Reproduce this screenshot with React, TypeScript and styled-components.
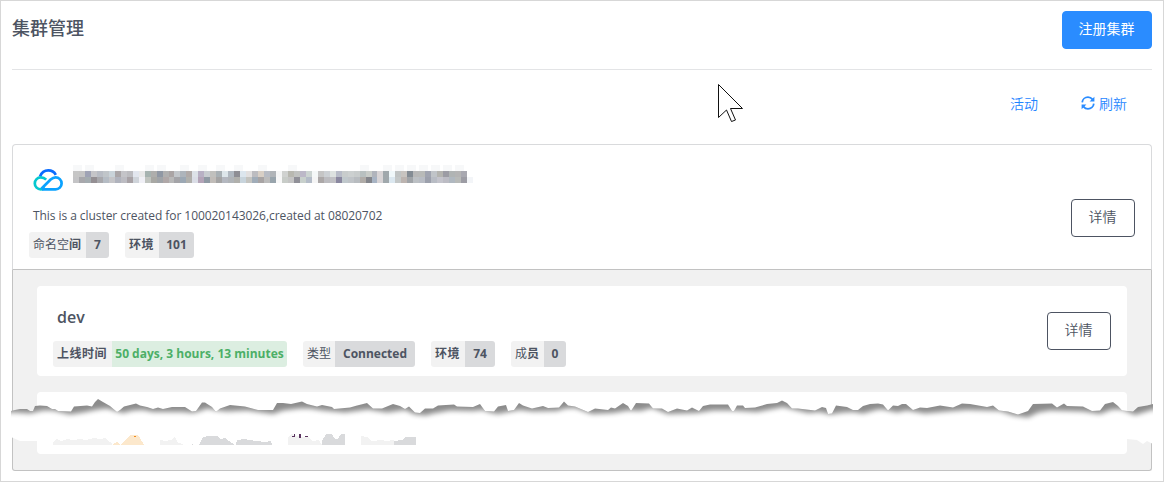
import React from 'react';
import styled, { createGlobalStyle } from 'styled-components';

const GlobalStyle = createGlobalStyle`
  * { box-sizing: border-box; }
  body {
    margin: 0;
    background: #fff;
    color: #4d5462;
    font-family: "Open Sans", "Noto Sans CJK SC", sans-serif;
  }
`;

const Page = styled.main`
  position: relative;
  width: 1164px;
  height: 482px;
  border: 1px solid #d7d7d7;
  padding: 0 11px;
  overflow: hidden;
`;

const Header = styled.header`
  display: flex;
  justify-content: space-between;
  align-items: flex-start;
  height: 69px;
  padding-top: 10px;
  border-bottom: 1px solid #e3e4e6;
`;

const Title = styled.h1`
  margin: 4px 0 0;
  font-size: 18px;
  line-height: 26px;
  font-weight: 500;
`;

const Button = styled.button<{ $primary?: boolean }>`
  width: ${p => (p.$primary ? 90 : 64)}px;
  height: 38px;
  flex: none;
  padding: 0 1px 4px 0;
  border: 1px solid ${p => (p.$primary ? '#2a8cff' : '#4d5462')};
  border-radius: 4px;
  background: ${p => (p.$primary ? '#2a8cff' : '#fff')};
  color: ${p => (p.$primary ? '#fff' : '#4d5462')};
  font-family: inherit;
  font-size: 14px;
  font-weight: ${p => (p.$primary ? 400 : 350)};
`;

const Actions = styled.nav`
  display: flex;
  justify-content: flex-end;
  gap: 43px;
  height: 74px;
  padding: 23px 25px 0 0;
`;

const Action = styled.a`
  display: flex;
  align-items: center;
  gap: 4px;
  height: 20px;
  color: #1f85ff;
  font-size: 14px;
  font-weight: 350;
`;

const Cluster = styled.section`
  height: 126px;
  display: flex;
  justify-content: space-between;
  padding: 20px 16px 0;
  border: 1px solid #d9dadc;
  border-bottom-color: #c2c2c2;
  border-radius: 4px 4px 0 0;
`;

const ButtonSlot = styled.div`
  padding-top: 34px;
`;

const NameRow = styled.div`
  display: flex;
  gap: 10px;
  height: 34px;
  padding-left: 4px;
`;

const Description = styled.p`
  margin: 8px 0 7px 4px;
  font-size: 12px;
  line-height: 18px;
  height: 18px;
  letter-spacing: -0.062px;
`;

const Details = styled.section`
  height: 201px;
  padding: 16px 24px;
  display: flex;
  flex-direction: column;
  gap: 16px;
  background: #f1f1f1;
  border: 1px solid #c2c2c2;
  border-top: 0;
  border-radius: 0 0 3px 3px;
`;

const Member = styled.article<{ $height: number }>`
  display: flex;
  justify-content: space-between;
  height: ${p => p.$height}px;
  padding: 18px 16px 0;
  background: #fff;
  border-radius: 4px;
`;

const MemberButtonSlot = styled.div`
  padding-top: 8px;
`;

const MemberName = styled.h2`
  margin: 0 0 11px 4px;
  font-size: 16px;
  line-height: 26px;
  font-weight: 650;
`;

const Tags = styled.div`
  display: flex;
  gap: 16px;
`;

const TagBox = styled.div`
  display: flex;
  height: 26px;
  border-radius: 3px;
  overflow: hidden;
  font-size: 12px;
  line-height: 25px;
  white-space: nowrap;
`;

const TagLabel = styled.span<{ $width: number }>`
  width: ${p => p.$width}px;
  padding-left: 4px;
  background: #f2f2f2;
  b { font-weight: 600; letter-spacing: 0.5px; }
`;

const TagValue = styled.span<{ $width: number; $green?: boolean }>`
  width: ${p => p.$width}px;
  text-align: center;
  font-weight: 700;
  background: ${p => (p.$green ? '#dceee1' : '#d9dadc')};
  color: ${p => (p.$green ? '#4caf67' : '#4d5462')};
`;

const Overlay = styled.svg`
  position: absolute;
  left: -1px;
  top: -1px;
  pointer-events: none;
`;

type TagProps = {
  label: React.ReactNode;
  value: string;
  widths: [number, number];
  green?: boolean;
};

const Tag = ({ label, value, widths, green }: TagProps) => (
  <TagBox>
    <TagLabel $width={widths[0]}>{label}</TagLabel>
    <TagValue $width={widths[1]} $green={green}>{value}</TagValue>
  </TagBox>
);

const CloudLogo = () => (
  <svg width="30" height="34" viewBox="0 0 30 34" fill="none" strokeWidth="2.7">
    <path d="M7 11.5C8.5 7.6 11.5 5.4 15.3 5.4c3.4 0 6.2 2 7.5 4.4" stroke="#0a6cff" />
    <path d="M13.2 14.6C11.6 13 9.8 12.4 7.8 12.4A6 6 0 0 0 7.8 24.4C9.4 24.4 10.5 24 12 22.7" stroke="#05c8cf" />
    <path d="M9 24.4h13.6a6 6 0 0 0 0-12c-2 0-3.4.8-5 2.2L8.4 23.8" stroke="#0aa2ff" />
  </svg>
);

const RefreshIcon = () => (
  <svg width="14" height="14" viewBox="0 0 14 14" fill="none">
    <path d="M1.2 6.3C1.5 3.3 4 1.2 7 1.2c1.8 0 3.4.8 4.5 2.2M12.8 7.7c-.3 3-2.8 5.1-5.8 5.1-1.8 0-3.4-.8-4.5-2.2" stroke="#2a8cff" strokeWidth="1.8" />
    <path d="M13.4.7v4.8H8.6zM.6 13.3V8.5h4.8z" fill="#2a8cff" />
  </svg>
);

const MOSAIC = [
  'c6c6c6 c4c4c4 9fa3b5 c5c5c8 b8bcc4 c0c5c9 c9d3d9 aaa6a8 c4c4c8 bcbcc0 e2e6ee e8e8e8 a6b3b0 aeaeac 9098a4 b0b0b0 aaa4a4 c2c6ca adb4bb b0aaa8 dde2e8 b8b0c4 c8ccd0 c0c0bd a8b0b4 dde6ea b0b8c0 8e8e94 dce6ee e2e0e0 bcbcc0 d8cfc5 b8bcc4 b0b4b8 f5f6f6 d0d2d0 b8b8b0 c0c2c0 bcb8c8 ccd4d2 f5f8f8 c5c5c5 ccd0d4 dde2e0 b8bcc8 c8cccc ccd0d0 c8cccc b8c0c0 c8ccc8 b0b4bc d8d4d6 a0a8ac f0f8fa c0c4c4 c8c4c0 848c94 b8b8b8 b8bab8 a0a4b0 c0c4c8 b4b4b0 9c9ca4 b0b4b4 b4b4b4 a8a8b0',
  'c4c4c6 a8a8ac a4acb0 948f93 a8a8ac b5bcc4 c5c5c8 b0b3bd bcbcc2 a8a2a6 cfd4da f0f0f6 c0c4bf a8a8a4 a0a4a8 b0a8a8 b8b8b8 a4a4a8 9ca8b4 b0b0ac dadde6 b4a4b8 909aa4 c0bcb8 a4a4a4 b4b8c0 b0b4b8 b0b0ac c8d4dc c4c4c0 a0acb8 a8a4a4 bcbcbc 98a4ac f8f8f8 c8ccc8 c4c4c4 909098 c8d0cc b4bcc8 f5f5f5 aca8a8 bcbcc0 c0c0c4 8a88a0 c0c8cc c0c4c8 b8bcc0 b0aca8 84868c a8b4c4 d8d4d6 a0a8ac dce8f0 c4c8c8 bcb4b0 a0a4a8 bcc0c4 b8bcc4 9ca0ac b8bcc4 c4c4cc bcbcc4 b0b8c0 b8bab8 9c9ca4',
].map(row => row.split(' '));

const Mosaic = () => (
  <svg width="400" height="18" viewBox="0 0 400 18" shapeRendering="crispEdges">
    {[0, 2, 7, 12, 14, 18, 21, 24, 27, 31, 36, 48, 52, 54, 56, 58, 60, 62, 64].map(c => (
      <rect key={c} x={c * 5.97} y="0" width="9" height="6" fill="#f7f8f9" />
    ))}
    {MOSAIC.map((row, r) =>
      row.map((cell, c) => (
        <rect key={`${r}-${c}`} x={c * 5.97} y={6 + r * 6} width="5.97" height="6" fill={`#${cell}`} />
      )),
    )}
    <rect x="394" y="12" width="6" height="6" fill="#f3f5f8" />
  </svg>
);

const TEAR_TOP =
  '11,411 15,410 20,409 27,409 30,411 33,411 35,406 40,405.5 47,406 52,409 55,409 58,411 71,411.5 74,406.5 87,405.5 92,406.5 95,402 98,399 103,402 110,406 117,412 120,410 124,406.5 136,403.5 140,405.5 147,407 153,409 158,407.5 163,409 172,407 185,407 192,411.5 196,411 202,402.5 205,402.5 212,407 216,412 220,408.5 230,405 245,406.5 258,410 273,410 277,403 283,403 291,404 302,401.5 307,404 317,406.5 322,405 332,407 334,409 350,407.5 357,405.5 367,403 373,408.5 382,408.5 393,404 400,406 405,409 409,406.5 415,412.5 420,413 425,408.5 433,408.5 438,405.5 454,404.5 457,406.5 473,407 480,404 485,411 494,411.5 498,406.5 506,405 508,411 514,410 519,403 523,405.5 532,408.5 543,406 548,408 559,407.5 564,401.5 568,405.5 575,406.5 588,412 595,408.5 608,410 611,407.5 615,408.5 623,403 628,406 631,411 636,403 649,403.5 653,408.5 662,408.5 668,412 677,408.5 687,410.5 692,407.5 699,411 703,406 710,404.5 728,404.5 732,411 734,411 737,405.5 743,405.5 745,408 755,407.5 767,404 777,403 782,400.5 787,403 792,408.5 798,408.5 815,410.5 822,407 826,408 828,414 832,413.5 836,405.5 847,407 853,410 858,410 863,406 870,404 878,403.5 883,404.5 888,410.5 893,405.5 898,406 902,404 906,404 913,410 920,407.5 927,408 940,405.5 953,407.5 962,403.5 970,404 987,407 993,405.5 999,410.5 1008,411.5 1018,414.5 1028,411 1033,404 1052,403.5 1057,407.5 1064,403.5 1067,406 1083,406.5 1092,411 1100,410.5 1105,404 1113,402 1118,406 1122,410.5 1133,411.5 1138,407 1147,405.5 1153,404';

const TEAR_LOW =
  '0,414 15,414 30,415 43,412 53,412 70,416 83,414 98,411 107,410 117,413 123,414.5 133,412 143,411.5 153,413.5 182,413.5 193,414.5 202,412 207,410 217,412 227,413 247,412 273,415.5 283,412 300,410 310,410 323,412 345,414 368,411 387,414 405,411.5 415,416 426,417 433,415 450,412 473,412.5 483,411.5 490,414 498,415.5 508,413.5 520,411.5 533,413 557,412.5 565,410 575,409.5 592,415.5 613,414.5 628,412 640,412.5 652,409.5 668,415.5 697,414.5 713,412 730,412 757,413.5 770,411 783,408.5 793,411 808,414.5 820,413.5 830,416 843,414 853,413.5 863,415 878,411 883,411 897,414 907,412 925,415 947,413 967,411.5 1000,412.5 1013,417 1028,419 1038,414 1050,412 1083,413 1100,415.5 1112,411 1122,411 1135,416.5 1153,411 1164,411';

const PaperTear = () => (
  <g>
    <defs>
      <clipPath id="tearArea">
        <polygon points={`${TEAR_TOP} 1153,444 1147,441 1143,444 1137,440 1127,439 1127,445 37,445 37,441 20,441 11,437`} shapeRendering="crispEdges" />
      </clipPath>
      <filter id="soften" x="-5%" y="-40%" width="110%" height="180%">
        <feGaussianBlur stdDeviation="2.5" />
      </filter>
    </defs>
    <g clipPath="url(#tearArea)">
      <rect x="0" y="395" width="1164" height="30" fill="#8c8c8c" />
      <polygon transform="translate(0 -1.5)" points={`${TEAR_LOW} 1180,411 1180,480 -20,480 -20,414`} fill="#fff" filter="url(#soften)" />
    </g>
    <g shapeRendering="crispEdges">
      <path d="M53 445v-3l4-3 4 2 6-2 6 1 7-1 6 1 8-2 6 1 5-1 5 4 2 1v2z" fill="#f2f2f2" />
      <path d="M112 445l5-3 3 3h1l5-6 5-4 6 0 3 3 4 7z" fill="#fce8cc" />
      <path d="M134 436h2v1h-2z" fill="#f08c1e" />
      <path d="M160 445v-5l5 1 6-1 4-3 3 6 5 1v1z" fill="#f2f2f2" />
      <path d="M192 444h1v1h-1zM199 445l4-8 6-1h8l4 3 4-1 4 3 6 4zM236 445l1-5 7-1 6 1 6 1 9 1 6-1 1 4z" fill="#d9dadc" />
      <path d="M288 445v-8l4-3 8 3 8 0 5 4 6-1 3 5z" fill="#f2f2f2" />
      <path d="M322 445v-4l4-7h6l3 5h3l3-5h4v11z" fill="#d9dadc" />
      <path d="M361 445v-9l6 1 5 4 9-1 5 1 8-1v5z" fill="#f2f2f2" />
      <path d="M394 445v-4l8-1 4-3h10v8z" fill="#d9dadc" />
      <path d="M292 436h3v1h-3zM294 434h1v2h-1zM299 434h2v4h-2zM305 436h3v1h-3z" fill="#5b3460" />
    </g>
  </g>
);

const Cursor = () => (
  <path d="M718.5 84.5v33l8-7.5 5 11.5 4-1.5-5-11.5h12z" fill="#fff" stroke="#111" />
);

export default function App() {
  return (
    <>
      <GlobalStyle />
      <Page>
        <Header>
          <Title>集群管理</Title>
          <Button $primary>注册集群</Button>
        </Header>
        <Actions>
          <Action>活动</Action>
          <Action><RefreshIcon />刷新</Action>
        </Actions>
        <Cluster>
          <div>
            <NameRow><CloudLogo /><Mosaic /></NameRow>
            <Description>This is a cluster created for 100020143026,created at 08020702</Description>
            <Tags>
              <Tag label={<>命名空<b>间</b></>} value="7" widths={[57, 23]} />
              <Tag label={<b>环境</b>} value="101" widths={[34, 35]} />
            </Tags>
          </div>
          <ButtonSlot><Button>详情</Button></ButtonSlot>
        </Cluster>
        <Details>
          <Member $height={90}>
            <div>
              <MemberName>dev</MemberName>
              <Tags>
                <Tag label={<b>上线时间</b>} value="50 days, 3 hours, 13 minutes" widths={[59, 175]} green />
                <Tag label="类型" value="Connected" widths={[32, 80]} />
                <Tag label={<b>环境</b>} value="74" widths={[34, 30]} />
                <Tag label={<>成<b>员</b></>} value="0" widths={[33, 22]} />
              </Tags>
            </div>
            <MemberButtonSlot><Button>详情</Button></MemberButtonSlot>
          </Member>
          <Member $height={62} />
        </Details>
        <Overlay width="1164" height="482" viewBox="0 0 1164 482">
          <PaperTear />
          <Cursor />
        </Overlay>
      </Page>
    </>
  );
}
